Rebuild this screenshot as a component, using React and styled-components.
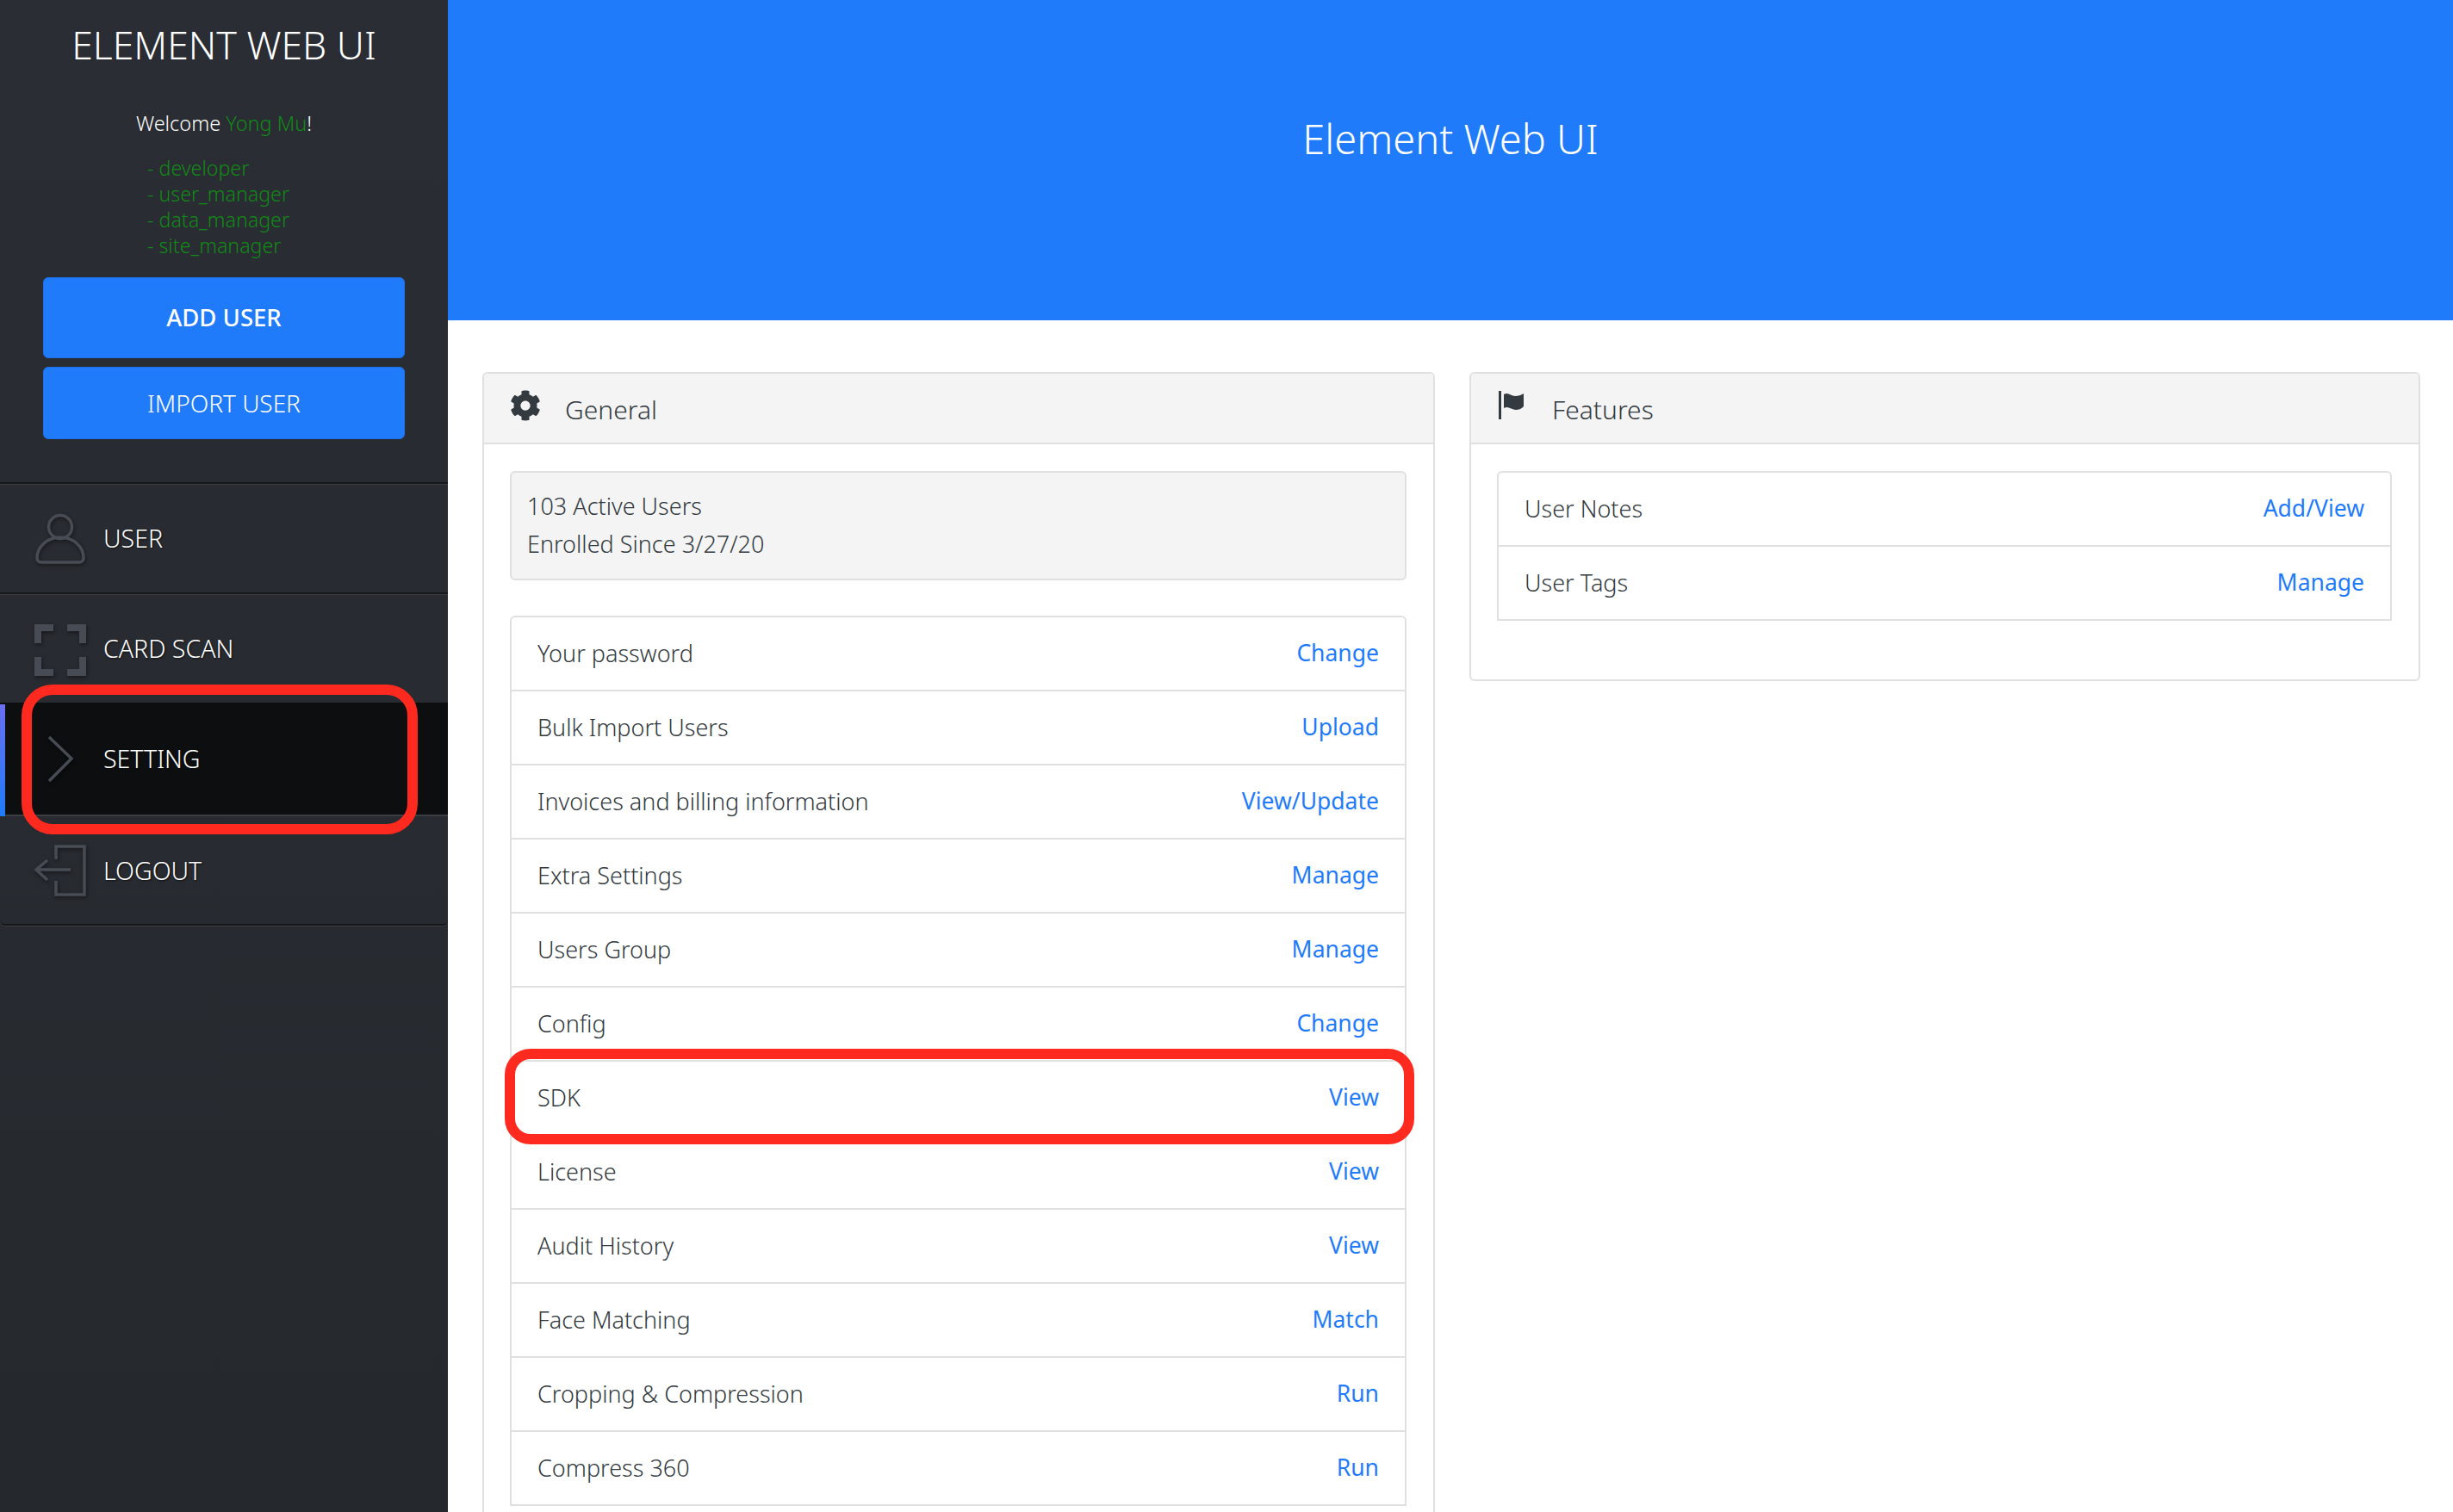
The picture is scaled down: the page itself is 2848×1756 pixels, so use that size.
import React from "react";
import styled, { createGlobalStyle } from "styled-components";
import { FaCog } from "react-icons/fa";

const GlobalStyle = createGlobalStyle`
  html, body {
    margin: 0;
    height: 100%;
    overflow: hidden;
    background: #fff;
  }
  * {
    box-sizing: border-box;
  }
  body {
    font-family: "Noto Sans", "Lato", sans-serif;
    font-weight: 350;
    color: #333a40;
  }
`;

const Page = styled.div`
  display: grid;
  grid-template-columns: 520px 1fr;
  height: 1756px;
  position: relative;
  overflow: hidden;
`;

const Sidebar = styled.aside`
  background: linear-gradient(#2a2d33, #25282d);
  display: flex;
  flex-direction: column;
`;

const Brand = styled.div`
  height: 562px;
  padding-top: 26px;
  color: #fff;
  display: flex;
  flex-direction: column;
  align-items: center;
  border-bottom: 2px solid #15171a;
  box-shadow: 0 1px 0 #3a3d42;
`;

const BrandTitle = styled.h1`
  margin: 0;
  font-size: 44.5px;
  line-height: 52px;
  font-weight: 300;
`;

const Welcome = styled.div`
  margin-top: 50px;
  font-size: 23.5px;
  line-height: 30px;
  span {
    color: #118a17;
  }
`;

const Roles = styled.ul`
  list-style: none;
  margin: 22px 0 0;
  padding: 0 0 0 171px;
  width: 100%;
  color: #118a17;
  font-size: 23.2px;
  line-height: 30px;
`;

const SideButton = styled.button`
  width: 420px;
  height: ${(p) => p.$height}px;
  margin-top: ${(p) => p.$top}px;
  padding-bottom: 2px;
  border: 1px solid #1c72ea;
  border-radius: 6px;
  background: #1f7bf9;
  color: #fff;
  font-family: inherit;
  font-size: ${(p) => p.$size}px;
  font-weight: ${(p) => p.$weight};
`;

const Nav = styled.nav`
  display: flex;
  flex-direction: column;
`;

const NavItem = styled.a`
  height: ${(p) => p.$height}px;
  display: flex;
  align-items: center;
  gap: 20px;
  padding-left: 40px;
  color: #fff;
  font-size: 28.5px;
  text-shadow: 1px 1px 2px #111;
  position: relative;
  ${(p) => p.$line && "border-bottom: 2px solid #15171a; box-shadow: 0 1px 0 #3a3d42;"}
  ${(p) => p.$last && "border-radius: 0 0 6px 6px;"}
  ${(p) =>
    p.$active &&
    `background: #0c0e10;
    border-bottom: 2px solid #3a3d42;
    &::before {
      content: "";
      position: absolute;
      left: 0;
      top: 2px;
      bottom: -2px;
      width: 6px;
      background: linear-gradient(#6a6ff0, #1f7bf9);
    }`}
`;

const NavIcon = styled.svg`
  width: 60px;
  height: 60px;
  flex: none;
  overflow: visible;
  fill: none;
  stroke: #474c54;
  stroke-width: ${(p) => p.$stroke || 3.5};
  filter: drop-shadow(1px 2px 2px rgba(0, 0, 0, 0.45));
`;

const Main = styled.main`
  display: flex;
  flex-direction: column;
  min-width: 0;
`;

const Banner = styled.header`
  height: 372px;
  background: #1f7bf9;
  color: #fff;
  display: flex;
  align-items: center;
  justify-content: center;
  padding-bottom: 50px;
  font-size: 47px;
`;

const Columns = styled.div`
  display: grid;
  grid-template-columns: 1106px 1104px;
  gap: 40px;
  padding: 60px 0 0 40px;
  align-items: start;
`;

const Card = styled.section`
  border: 2px solid #e0e0e0;
  border-radius: 6px;
  background: #fff;
  ${(p) => p.$tall && "height: 1400px;"}
`;

const CardHead = styled.div`
  height: 82px;
  display: flex;
  align-items: center;
  gap: 28px;
  padding: 2px 0 0 30px;
  background: #f4f4f4;
  border-bottom: 2px solid #e0e0e0;
  border-radius: 4px 4px 0 0;
  font-size: 30px;
  svg {
    width: 36px;
    height: 36px;
    margin-top: -8px;
    fill: #333a40;
  }
`;

const CardBody = styled.div`
  padding: 31px 31px 68px 30px;
`;

const Stats = styled.div`
  height: 127px;
  padding: 17px 18px;
  background: #f4f4f4;
  border: 2px solid #e0e0e0;
  border-radius: 6px;
  font-size: 27px;
  line-height: 44px;
  margin-bottom: 41px;
`;

const List = styled.ul`
  list-style: none;
  margin: 0;
  padding: 0;
  border: 2px solid #e0e0e0;
  border-bottom: 0;
  border-radius: 6px 6px 0 0;
`;

const Row = styled.li`
  height: 86px;
  display: flex;
  align-items: center;
  justify-content: space-between;
  padding: 0 30px 2px;
  border-bottom: 2px solid #e0e0e0;
  font-size: 27px;
`;

const RowLink = styled.a`
  color: #1f7bf9;
  font-size: 26.5px;
  font-weight: 400;
`;

const Callout = styled.div`
  position: absolute;
  left: ${(p) => p.$x}px;
  top: ${(p) => p.$y}px;
  width: ${(p) => p.$w}px;
  height: ${(p) => p.$h}px;
  border: 12px solid #ff2a1f;
  border-radius: ${(p) => p.$r}px;
`;

const general = [
  ["Your password", "Change"],
  ["Bulk Import Users", "Upload"],
  ["Invoices and billing information", "View/Update"],
  ["Extra Settings", "Manage"],
  ["Users Group", "Manage"],
  ["Config", "Change"],
  ["SDK", "View"],
  ["License", "View"],
  ["Audit History", "View"],
  ["Face Matching", "Match"],
  ["Cropping & Compression", "Run"],
  ["Compress 360", "Run"],
];

const features = [
  ["User Notes", "Add/View"],
  ["User Tags", "Manage"],
];

const FlagIcon = () => (
  <svg viewBox="0 0 36 36">
    <rect x="2" y="1" width="3" height="33" />
    <path d="M8 5c5-3 8 2 13 2 4 0 7-1 10-3v15c-3 3-6 4-9 4-5 0-9-5-14-2z" />
  </svg>
);

export default function App() {
  return (
    <Page>
      <GlobalStyle />
      <Sidebar>
        <Brand>
          <BrandTitle>ELEMENT WEB UI</BrandTitle>
          <Welcome>
            Welcome <span>Yong Mu</span>!
          </Welcome>
          <Roles>
            <li>- developer</li>
            <li>- user_manager</li>
            <li>- data_manager</li>
            <li>- site_manager</li>
          </Roles>
          <SideButton $height={94} $top={22} $weight={500} $size={27.5}>ADD USER</SideButton>
          <SideButton $height={84} $top={10} $weight={300} $size={28}>IMPORT USER</SideButton>
        </Brand>
        <Nav>
          <NavItem $height={128} $line>
            <NavIcon viewBox="0 0 60 60">
              <circle cx="30" cy="17" r="13.5" />
              <path d="M30 29c-15 0-27 11-27 24 0 3 2 5 5 5h44c3 0 5-2 5-5 0-13-12-24-27-24z" />
            </NavIcon>
            USER
          </NavItem>
          <NavItem $height={126}>
            <NavIcon viewBox="0 0 60 60" $stroke={8}>
              <path d="M4 24V6H22M38 6H56V24M4 40V58H22M38 58H56V40" />
            </NavIcon>
            CARD SCAN
          </NavItem>
          <NavItem $height={132} $active>
            <NavIcon viewBox="0 0 60 60" $stroke={3.5}>
              <path d="M17 5L43 30L17 56" />
            </NavIcon>
            SETTING
          </NavItem>
          <NavItem $height={127} $line $last>
            <NavIcon viewBox="0 0 60 60" $stroke={3.5}>
              <path d="M25 17V2H58V58H25V42M42 29H2M15 18L2 29L15 41" />
            </NavIcon>
            LOGOUT
          </NavItem>
        </Nav>
      </Sidebar>
      <Main>
        <Banner>Element Web UI</Banner>
        <Columns>
          <Card $tall>
            <CardHead>
              <FaCog />
              General
            </CardHead>
            <CardBody>
              <Stats>
                103 Active Users
                <br />
                Enrolled Since 3/27/20
              </Stats>
              <List>
                {general.map(([label, action]) => (
                  <Row key={label}>
                    {label}
                    <RowLink>{action}</RowLink>
                  </Row>
                ))}
              </List>
            </CardBody>
          </Card>
          <Card>
            <CardHead>
              <FlagIcon />
              Features
            </CardHead>
            <CardBody>
              <List>
                {features.map(([label, action]) => (
                  <Row key={label}>
                    {label}
                    <RowLink>{action}</RowLink>
                  </Row>
                ))}
              </List>
            </CardBody>
          </Card>
        </Columns>
      </Main>
      <Callout $x={25} $y={795} $w={460} $h={174} $r={36} />
      <Callout $x={586} $y={1218} $w={1056} $h={111} $r={30} />
    </Page>
  );
}
